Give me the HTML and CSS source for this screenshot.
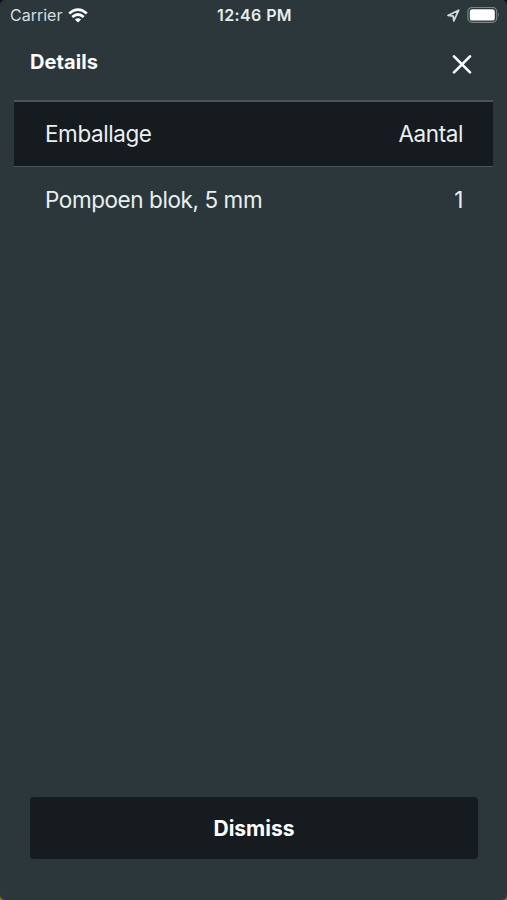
FILE: index.html
```html
<!DOCTYPE html>
<html lang="nl">
<head>
<meta charset="utf-8">
<title>Details</title>
<link rel="stylesheet" href="styles.css">
</head>
<body>
<main class="screen">
  <div class="status">
    <div class="carrier">
      <span>Carrier</span>
      <svg width="20" height="15" viewBox="0 0 20 15" fill="none" stroke="currentColor" stroke-width="2.7">
        <path d="M1.2 5.5Q10-2.2 18.8 5.5"/>
        <path d="M4.3 9Q10 4 15.7 9"/>
        <path d="M10 14.6L6.9 11.5Q10 8.9 13.1 11.5Z" fill="currentColor" stroke="none"/>
      </svg>
    </div>
    <time class="clock">12:46 PM</time>
    <div class="indicators">
      <svg class="location" width="13" height="13" viewBox="0 0 13 13" fill="none" stroke="currentColor" stroke-width="1.7" stroke-linejoin="round">
        <path d="M1 6.4L11.7 1.2L6.8 11.8L6.2 7.2Z"/>
      </svg>
      <svg width="33" height="17" viewBox="0 0 33 17">
        <rect x=".9" y=".4" width="28.8" height="15" rx="4.4" fill="none" stroke="#7d8487" stroke-width="1.2"/>
        <rect x="2.8" y="2.3" width="25" height="11.2" rx="2.6" fill="#fff"/>
        <path d="M31 5.5Q32.8 7.9 31 10.3Z" fill="#7d8487"/>
      </svg>
    </div>
  </div>
  <header class="header">
    <h1 class="title">Details</h1>
    <button class="close" aria-label="Close">
      <svg width="20" height="20" viewBox="0 0 20 20" fill="none" stroke="currentColor" stroke-width="2.6" stroke-linecap="round">
        <path d="M2 2.3L18 18.3M18 2.3L2 18.3"/>
      </svg>
    </button>
  </header>
  <section class="list">
    <div class="row row-head"><span>Emballage</span><span>Aantal</span></div>
    <div class="row"><span>Pompoen blok, 5 mm</span><span>1</span></div>
  </section>
  <button class="dismiss"><span>Dismiss</span></button>
</main>
</body>
</html>
```

FILE: styles.css
```css
* { box-sizing: border-box; }
html { background: #171c20; }
body {
  margin: 0;
  height: 900px;
  overflow: hidden;
  background: linear-gradient(#0b1014 50%, #77791c 50%);
  font-family: Inter, "Liberation Sans", sans-serif;
  color: #e9eff0;
}
button { border: 0; padding: 0; font: inherit; color: inherit; }
.screen {
  height: 900px;
  display: flex;
  flex-direction: column;
  background: #2c373b;
  border-radius: 5px;
}
.status {
  height: 30px;
  display: grid;
  grid-template-columns: 1fr auto 1fr;
  align-items: center;
  padding: 0 7px 0 10px;
  font-size: 16px;
}
.carrier { display: flex; align-items: center; gap: 6px; color: #d5dcdf; }
.carrier svg { color: #fff; }
.clock { margin-left: -1px; font-weight: 600; font-size: 16px; letter-spacing: .4px; color: #e7edef; }
.indicators { display: flex; align-items: center; justify-content: flex-end; gap: 7px; }
.location { color: #d5dcdf; }
.header {
  height: 70px;
  display: flex;
  justify-content: space-between;
  align-items: flex-start;
  padding: 20px 35px 0 30px;
}
.title { margin: 0; font-size: 20px; line-height: 24px; font-weight: 700; letter-spacing: .1px; color: #fff; }
.close { display: flex; margin-top: 4px; background: none; color: #fff; }
.list { flex: 1; padding: 0 14px; }
.row {
  height: 66px;
  display: flex;
  justify-content: space-between;
  align-items: center;
  padding: 0 30px 2px 31px;
  font-size: 22.5px;
  letter-spacing: -.42px;
}
.row-head {
  height: 67px;
  border: solid #4a5559;
  border-width: 2px 0 1px;
  background: #161b20;
}
.dismiss {
  height: 62px;
  margin: 0 29px 41px 30px;
  border-radius: 4px;
  background: #161b20;
  font-size: 21px;
  font-weight: 700;
  color: #fff;
}
```
